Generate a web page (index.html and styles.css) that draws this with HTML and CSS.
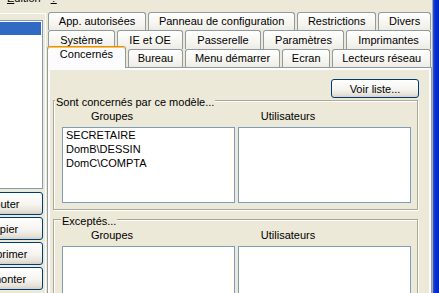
FILE: index.html
```html
<!DOCTYPE html>
<html lang="fr">
<head>
    <meta charset="UTF-8">
    <title>Modèles</title>
    <link rel="stylesheet" href="styles.css">
</head>
<body>
    <div class="app">
        <div class="app-main">
            <div class="menubar">
                <span class="menu-item"><u>E</u>dition</span>
                <span class="menu-item"><u>?</u></span>
            </div>
            <div class="window">
                <div class="sidebar">
                    <div class="sidebar-inner">
                        <div class="model-list">
                            <div class="model-item selected">Défaut</div>
                        </div>
                        <button class="btn side-btn">Ajouter</button>
                        <button class="btn side-btn">Copier</button>
                        <button class="btn side-btn">Supprimer</button>
                        <button class="btn side-btn">Remonter</button>
                    </div>
                </div>
                <div class="tabctl">
                    <div class="tab-row row-1">
                        <div class="tab">App. autorisées</div>
                        <div class="tab">Panneau de configuration</div>
                        <div class="tab">Restrictions</div>
                        <div class="tab">Divers</div>
                    </div>
                    <div class="tab-row row-2">
                        <div class="tab">Système</div>
                        <div class="tab">IE et OE</div>
                        <div class="tab">Passerelle</div>
                        <div class="tab">Paramètres</div>
                        <div class="tab">Imprimantes</div>
                    </div>
                    <div class="tab-row row-3">
                        <div class="tab active">Concernés</div>
                        <div class="tab">Bureau</div>
                        <div class="tab">Menu démarrer</div>
                        <div class="tab">Ecran</div>
                        <div class="tab">Lecteurs réseau</div>
                    </div>
                    <div class="tab-panel">
                        <div class="page">
                            <div class="toolbar">
                                <button class="btn btn-voir">Voir liste...</button>
                            </div>
                            <div class="groupbox">
                                <span class="group-title title-concernes">Sont concernés par ce modèle...</span>
                                <div class="columns">
                                    <div class="column">
                                        <div class="col-head">Groupes</div>
                                        <div class="listbox">
                                            <div class="list-item">SECRETAIRE</div>
                                            <div class="list-item">DomB\DESSIN</div>
                                            <div class="list-item">DomC\COMPTA</div>
                                        </div>
                                    </div>
                                    <div class="column">
                                        <div class="col-head">Utilisateurs</div>
                                        <div class="listbox"></div>
                                    </div>
                                </div>
                            </div>
                            <div class="groupbox">
                                <span class="group-title title-exceptes">Exceptés...</span>
                                <div class="columns">
                                    <div class="column">
                                        <div class="col-head">Groupes</div>
                                        <div class="listbox"></div>
                                    </div>
                                    <div class="column">
                                        <div class="col-head">Utilisateurs</div>
                                        <div class="listbox"></div>
                                    </div>
                                </div>
                            </div>
                        </div>
                    </div>
                </div>
            </div>
        </div>
        <div class="frame"></div>
    </div>
</body>
</html>
```

FILE: styles.css
```css
body {
    margin: 0;
    width: 439px;
    height: 293px;
    overflow: hidden;
    background: #ece9d8;
    font: 11px "Liberation Sans", Arial, sans-serif;
    color: #000;
}
.app {
    display: flex;
    height: 293px;
}
.app-main {
    width: 432px;
    display: flex;
    flex-direction: column;
}
.menubar {
    display: flex;
    gap: 10px;
    height: 7px;
    overflow: hidden;
    padding-left: 7px;
}
.menu-item {
    line-height: 13px;
    margin-top: -8px;
}
.window {
    display: flex;
    flex: 1;
    min-height: 0;
}
.sidebar {
    flex: none;
    width: 45px;
    margin-top: 6px;
    border-top: 1px solid #fff;
    border-right: 1px solid #fff;
    overflow: hidden;
}
.sidebar-inner {
    width: 82px;
    margin-left: -39px;
    padding-top: 6px;
}
.model-list {
    box-sizing: border-box;
    height: 169px;
    margin-bottom: 3px;
    border: 1px solid #7f9db9;
    background: #fff;
    padding: 1px;
}
.model-item {
    line-height: 13px;
    padding-left: 3px;
    white-space: nowrap;
}
.model-item.selected {
    background: #316ac5;
    color: #fff;
}
.btn {
    font: inherit;
    color: #000;
    padding: 0;
    border: 1px solid #003c74;
    border-radius: 3px;
    background: linear-gradient(#fff, #f5f4ef 55%, #e6e3da 85%, #d6d0c5);
}
.side-btn {
    display: block;
    width: 100%;
    height: 23px;
    margin-top: 2px;
}
.tabctl {
    flex: none;
    width: 385px;
    margin: 5px 0 0 1px;
    display: flex;
    flex-direction: column;
}
.tab-row {
    flex: none;
    display: flex;
    gap: 2px;
    padding: 0 1px;
}
.row-1 {
    height: 18px;
}
.row-2 {
    height: 19px;
}
.row-3 {
    height: 18px;
}
.tab {
    flex: 1 1 auto;
    padding: 0 6px;
    border: 1px solid #919b9c;
    border-bottom: 0;
    border-radius: 3px 3px 0 0;
    background: linear-gradient(#fff, #f4f3ee 70%, #ecebe5);
    text-align: center;
    white-space: nowrap;
}
.row-1 .tab {
    line-height: 17px;
}
.row-2 .tab {
    line-height: 18px;
}
.row-3 .tab {
    line-height: 16px;
}
.row-3 .tab.active {
    position: relative;
    z-index: 1;
    margin: -3px 0 -1px -1px;
    padding: 0 9px;
    line-height: 14px;
    background: #fcfcfe;
    border-top-color: #e68b2c;
    box-shadow: inset 0 1px #ffc73c;
}
.tab-panel {
    flex: 1;
    display: flex;
    border: 1px solid #919b9c;
    padding: 2px;
    background: #fcfcfe;
}
.page {
    flex: 1;
    background: #ece9d8;
}
.toolbar {
    display: flex;
    justify-content: flex-end;
    padding: 9px 10px 0 0;
}
.btn-voir {
    width: 88px;
    height: 19px;
}
.groupbox {
    margin: 2px 11px 0 3px;
    padding: 0 6px 6px 8px;
    border: 1px solid #aca899;
    box-shadow: inset 1px 1px #fff, 1px 1px #fff;
}
.groupbox + .groupbox {
    margin-top: 9px;
}
.group-title {
    display: block;
    width: fit-content;
    margin-top: -5px;
    padding: 0 1px;
    line-height: 13px;
    background: #ece9d8;
}
.title-concernes {
    margin-left: -7px;
}
.title-exceptes {
    margin-left: -1px;
}
.columns {
    display: flex;
    gap: 3px;
}
.column {
    width: 173px;
}
.col-head {
    width: 100px;
    margin: 1px 0 4px;
    line-height: 13px;
    text-align: center;
}
.listbox {
    box-sizing: border-box;
    height: 76px;
    padding: 0 3px;
    border: 1px solid #7f9db9;
    background: #fff;
}
.list-item {
    line-height: 14px;
    white-space: nowrap;
}
.frame {
    flex: 1;
    border-left: 1px solid #aca899;
    background: linear-gradient(to right, #2a5ae8, #0831d9 30%, #0024b8);
}
```
